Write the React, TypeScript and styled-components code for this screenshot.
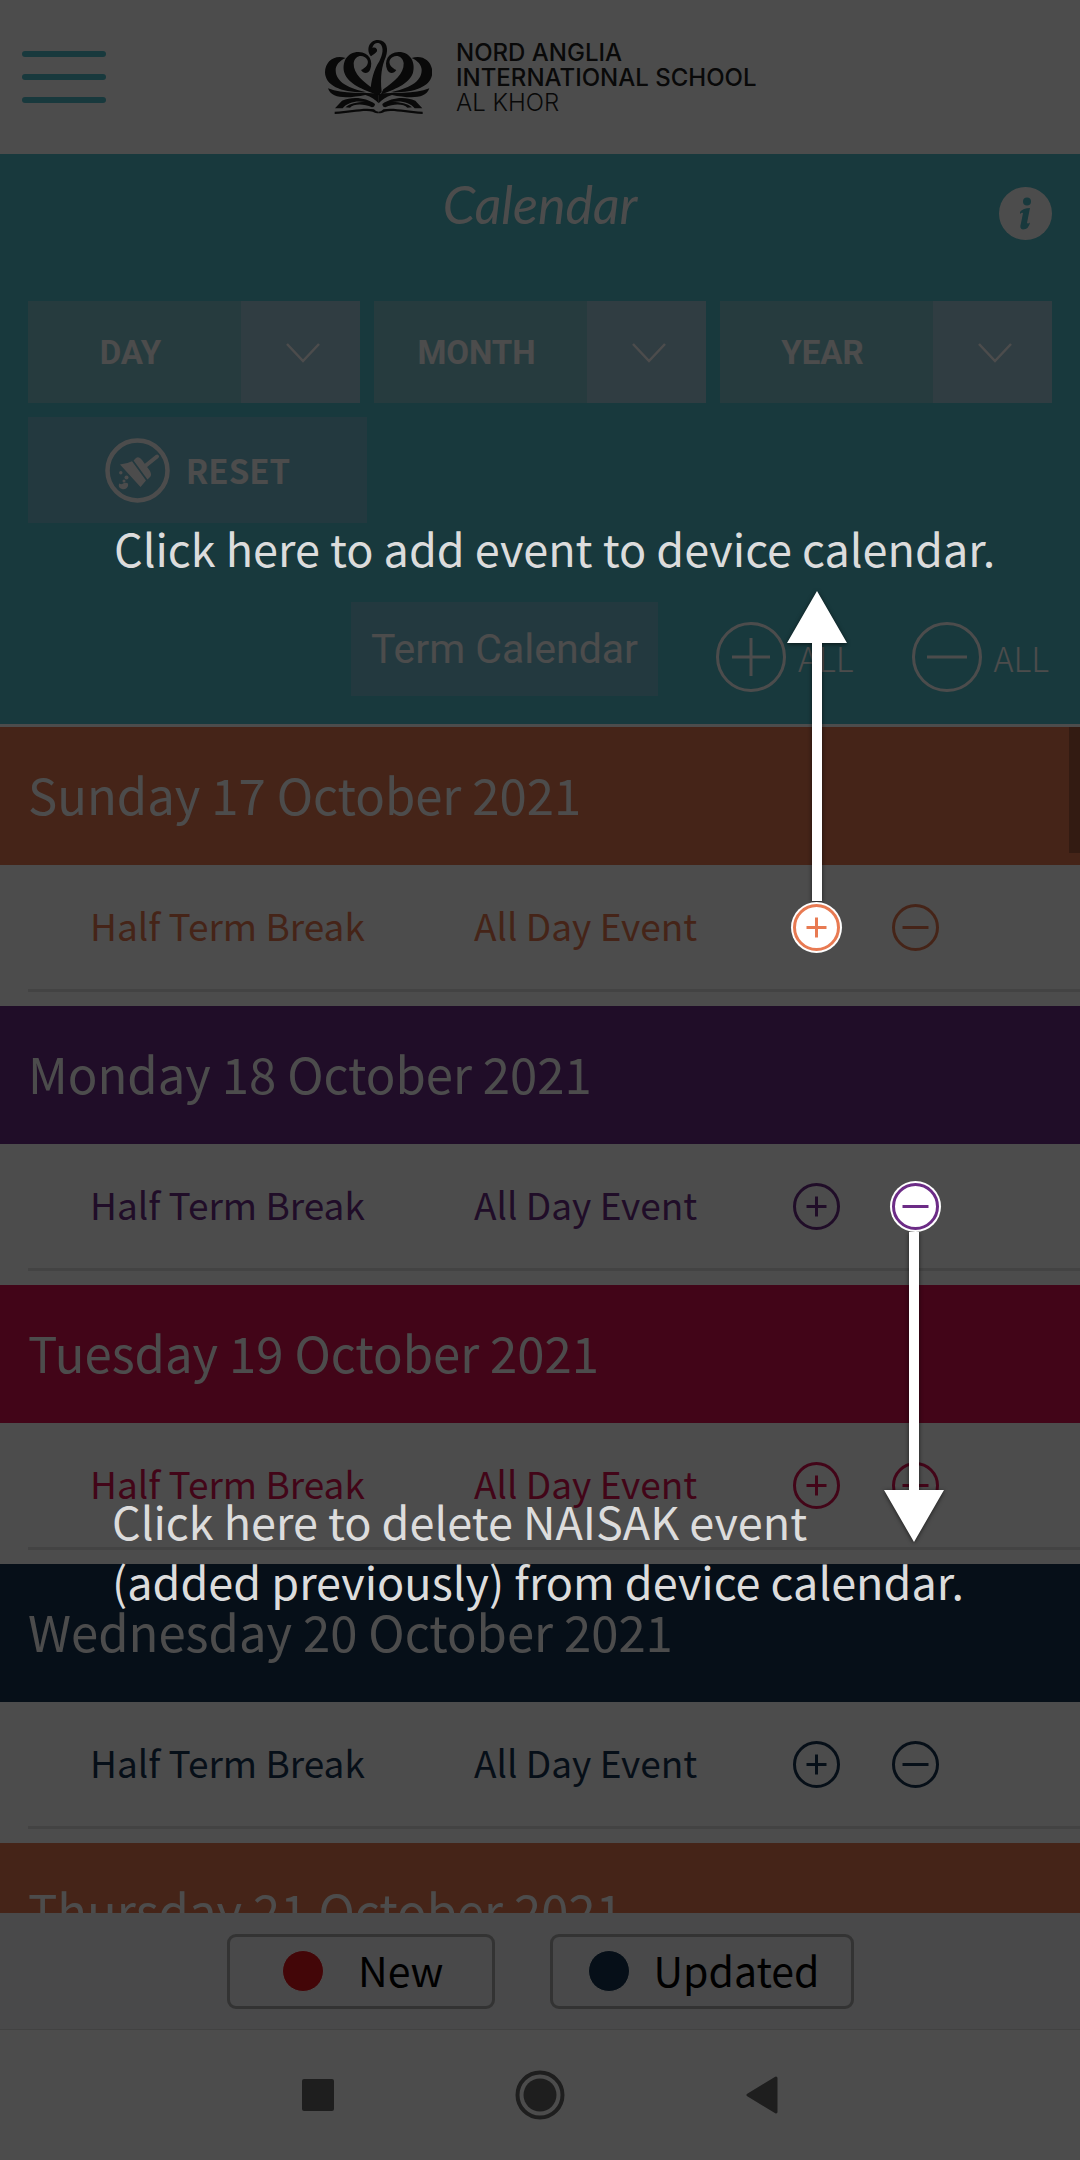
import React from "react";
import styled, { createGlobalStyle } from "styled-components";

const GlobalStyle = createGlobalStyle`
  *, *::before, *::after { box-sizing: border-box; }
  html, body, #root { height: 100%; }
  body { margin: 0; background: #ffffff; }
  button, select { font: inherit; color: inherit; border: 0; padding: 0; margin: 0; background: none; }
`;

const sans = `"Noto Sans CJK SC", "Noto Sans", sans-serif`;

const Screen = styled.div`
  position: relative;
  display: flex;
  flex-direction: column;
  height: 100vh;
  overflow: hidden;
  background: #ffffff;
  font-family: ${sans};
`;

const Header = styled.header`
  display: grid;
  grid-template-columns: 1fr auto 1fr;
  align-items: center;
  height: 154px;
  flex: none;
  padding: 0 22px;
`;

const MenuButton = styled.button`
  display: flex;
  flex-direction: column;
  gap: 17px;
  width: 84px;
`;

const MenuLine = styled.span`
  height: 6px;
  border-radius: 3px;
  background: #53becb;
`;

const Brand = styled.div`
  display: flex;
  align-items: center;
  gap: 24px;
`;

const BrandText = styled.div`
  display: flex;
  flex-direction: column;
  width: 299px;
  font-family: Inter, Lato, sans-serif;
  font-size: 24px;
  line-height: 25px;
  font-weight: 500;
  color: #1e1e1e;
  white-space: nowrap;
`;

const BrandPlace = styled.span`
  font-weight: 300;
`;

const Panel = styled.section`
  flex: none;
  padding: 0 28px 28px;
  background: #53becb;
  border-bottom: 3px solid #ffffff;
  color: #ffffff;
`;

const TitleRow = styled.div`
  display: grid;
  grid-template-columns: 1fr auto 1fr;
  align-items: start;
  height: 147px;
`;

const Title = styled.h1`
  grid-column: 2;
  margin: 18px 0 0;
  font-family: Lato, sans-serif;
  font-style: italic;
  font-weight: 400;
  font-size: 52px;
  line-height: 64px;
`;

const InfoButton = styled.button`
  justify-self: end;
  margin-top: 33px;
  width: 53px;
  height: 53px;
`;

const Filters = styled.div`
  display: grid;
  grid-template-columns: repeat(3, 1fr);
  gap: 14px;
`;

const SelectBox = styled.label`
  display: grid;
  grid-template-columns: 1fr 119px;
  height: 102px;
  background: #7fc5cf;
`;

const Select = styled.select`
  grid-area: 1 / 1 / 2 / 3;
  appearance: none;
  padding: 0 127px 0 0;
  font-family: Roboto, sans-serif;
  font-weight: 700;
  font-size: 33px;
  text-align: center;
  text-align-last: center;
  border-radius: 0;
`;

const SelectArrow = styled.span`
  grid-area: 1 / 2;
  display: flex;
  align-items: center;
  justify-content: center;
  padding: 2px 0 0 4px;
  background: #a0cbdc;
  pointer-events: none;
`;

const ResetButton = styled.button`
  display: flex;
  align-items: center;
  justify-content: center;
  gap: 16px;
  width: 339px;
  height: 106px;
  margin-top: 14px;
  background: #75bed2;
  font-weight: 700;
  font-size: 33px;
`;

const TermRow = styled.div`
  display: flex;
  justify-content: flex-end;
  align-items: flex-end;
  gap: 58px;
  margin-top: 79px;
  padding-right: 3px;
`;

const TermButton = styled.button`
  height: 94px;
  padding: 0 20px;
  background: #75bed2;
  font-family: Roboto, sans-serif;
  font-size: 41px;
  white-space: nowrap;
`;

const AllButton = styled.button`
  display: flex;
  align-items: center;
  gap: 12px;
  height: 78px;
  font-weight: 300;
  font-size: 34px;
`;

const ListFrame = styled.main`
  position: relative;
  flex: 1;
  min-height: 0;
  overflow: hidden;
`;

const ScrollThumb = styled.div`
  position: absolute;
  top: 0;
  right: 0;
  width: 11px;
  height: 126px;
  background: rgba(0, 0, 0, 0.26);
`;

const DayHeading = styled.h2<{ $color: string }>`
  margin: 0;
  padding: 0 28px 4px;
  background: ${(p) => p.$color};
  color: #ffffff;
  font-weight: 400;
  font-size: 49px;
  line-height: 134px;
  white-space: nowrap;
`;

const EventRow = styled.div<{ $color: string }>`
  display: grid;
  grid-template-columns: 384px 319px 99px 1fr;
  align-items: center;
  height: 124px;
  padding-left: 90px;
  color: ${(p) => p.$color};
  font-size: 37px;
  white-space: nowrap;
`;

const EventText = styled.span`
  padding-bottom: 4px;
`;

const Divider = styled.hr`
  height: 3px;
  margin: 0 0 14px 28px;
  border: 0;
  background: #e0e0e0;
`;

const RoundButton = styled.button<{ $lit?: boolean }>`
  display: block;
  width: 47px;
  height: 47px;
  border-radius: 50%;
  ${(p) =>
    p.$lit &&
    `
    position: relative;
    z-index: 3;
    background: #ffffff;
    box-shadow: 0 0 0 2px #ffffff;
  `}
`;

const Legend = styled.div`
  display: flex;
  flex: none;
  justify-content: center;
  align-items: center;
  gap: 55px;
  height: 117px;
  background: #f3f3f7;
  border-bottom: 1px solid #dddddd;
`;

const LegendButton = styled.button<{ $wide?: boolean }>`
  display: flex;
  align-items: center;
  justify-content: ${(p) => (p.$wide ? "center" : "space-between")};
  gap: 24px;
  width: ${(p) => (p.$wide ? 304 : 268)}px;
  height: 75px;
  padding: ${(p) => (p.$wide ? "0 0 0 4px" : "0 48px 0 52px")};
  border: 3px solid #aaaaaa;
  border-radius: 9px;
  font-size: 41px;
  line-height: 60px;
  color: #000000;
`;

const LegendText = styled.span`
  padding-bottom: 4px;
`;

const Dot = styled.span<{ $color: string }>`
  width: 42px;
  height: 42px;
  border-radius: 50%;
  border: 1px solid #ffffff;
  background: ${(p) => p.$color};
`;

const NavBar = styled.nav`
  display: grid;
  grid-template-columns: 222px 222px 222px;
  justify-content: center;
  align-items: center;
  flex: none;
  height: 130px;
`;

const NavButton = styled.button`
  display: flex;
  justify-content: center;
  align-items: center;
  height: 130px;
`;

const Shade = styled.div`
  position: absolute;
  inset: 0;
  z-index: 2;
  background: rgba(0, 0, 0, 0.7);
  pointer-events: none;
`;

const Hint = styled.p<{ $top: number; $left: number }>`
  position: absolute;
  top: ${(p) => p.$top}px;
  left: ${(p) => p.$left}px;
  margin: 0;
  color: #dcdcdc;
  font-size: 45px;
  line-height: 60px;
  white-space: nowrap;
`;

const Arrow = styled.svg<{ $top: number; $left: number }>`
  position: absolute;
  top: ${(p) => p.$top}px;
  left: ${(p) => p.$left}px;
  overflow: visible;
  filter: drop-shadow(0 1px 2px rgba(0, 0, 0, 0.6));
`;

const petals = (
  <>
    <path d="M137 114C104 102 75 124 75 157C76 198 125 219 200 217C150 206 107 188 107 150C107 135 119 122 137 114Z" />
    <path d="M183 150C190 162 204 162 210 150C221 124 208 97 176 96C140 96 125 128 133 158C146 194 190 208 230 224L222 208C190 186 160 162 161 130C163 106 190 100 202 119C208 132 197 143 183 150Z" />
    <path d="M84 205C94 240 150 234 196 225C214 230 226 240 236 250L236 222C190 216 130 224 84 205Z" />
    <path d="M105 265L126 242C160 228 200 234 225 252C225 258 221 262 216 262C190 250 160 252 150 263L136 262C150 250 170 246 196 246C170 241 142 246 128 265Z" />
    <path d="M104 275C150 274 190 262 222 268C228 274 232 275 236 275L236 280C230 280 224 279 218 275C190 269 150 281 104 282Z" />
  </>
);

const Crest = () => (
  <svg width="107" height="74" viewBox="75 60 321 222" fill="#1e1e1e" aria-hidden="true">
    {petals}
    <g transform="translate(472 0) scale(-1 1)">{petals}</g>
    <path d="M213 109C198 92 205 60 234 60C262 61 266 88 257 112C246 138 240 168 245 216L236 226L211 214C214 180 221 150 238 124C249 102 251 84 242 73C234 64 219 70 217 84C226 80 233 87 231 94C226 101 220 104 213 109Z" />
  </svg>
);

const Chevron = () => (
  <svg width="34" height="20" viewBox="0 0 34 20" fill="none" stroke="#ffffff" strokeWidth="2.5" aria-hidden="true">
    <path d="M1 1L17 18L33 1" />
  </svg>
);

const Brush = () => (
  <svg width="65" height="65" viewBox="0 0 65 65" fill="#ffffff" aria-hidden="true">
    <circle cx="32.5" cy="32.5" r="30" fill="none" stroke="#ffffff" strokeWidth="4.5" />
    <path d="M52 18.500L39 29" stroke="#ffffff" strokeWidth="4" strokeLinecap="round" />
    <path d="M28.600 22.500L31 20Q34 18 37 22L45 33Q47 37 45 39L42.500 41.500Z" />
    <path d="M15 26.500Q22 26 27 23.300L41 42.500L35.500 49Z" />
    <circle cx="15.800" cy="34.700" r="1.700" />
    <circle cx="21.500" cy="39.500" r="2" />
    <circle cx="19" cy="43" r="1.500" />
    <path d="M14 45.500Q17 47 19 45Q24 44 23 48Q21 52 17 51Q13 50 14 45.500Z" />
  </svg>
);

const SignIcon = ({ size, arm, sign, width }: { size: number; arm: number; sign: "plus" | "minus"; width: number }) => {
  const c = size / 2;
  return (
    <svg width={size} height={size} viewBox={`0 0 ${size} ${size}`} fill="none" stroke="currentColor" strokeWidth={width} aria-hidden="true">
      <circle cx={c} cy={c} r={c - width / 2} />
      <path d={`M${c - arm} ${c}H${c + arm}`} />
      {sign === "plus" && <path d={`M${c} ${c - arm}V${c + arm}`} />}
    </svg>
  );
};

const filters = ["DAY", "MONTH", "YEAR"];

type Day = { date: string; color: string; event?: string; time?: string; lit?: "plus" | "minus" };

const days: Day[] = [
  { date: "Sunday 17 October 2021", color: "#e87a52", event: "Half Term Break", time: "All Day Event", lit: "plus" },
  { date: "Monday 18 October 2021", color: "#6c2c86", event: "Half Term Break", time: "All Day Event", lit: "minus" },
  { date: "Tuesday 19 October 2021", color: "#dc1150", event: "Half Term Break", time: "All Day Event" },
  { date: "Wednesday 20 October 2021", color: "#173250", event: "Half Term Break", time: "All Day Event" },
  { date: "Thursday 21 October 2021", color: "#e87a52" },
];

export default function App() {
  return (
    <>
      <GlobalStyle />
      <Screen>
        <Header>
          <MenuButton aria-label="Menu">
            <MenuLine />
            <MenuLine />
            <MenuLine />
          </MenuButton>
          <Brand>
            <Crest />
            <BrandText>
              <span>NORD ANGLIA</span>
              <span>INTERNATIONAL SCHOOL</span>
              <BrandPlace>AL KHOR</BrandPlace>
            </BrandText>
          </Brand>
        </Header>

        <Panel>
          <TitleRow>
            <Title>Calendar</Title>
            <InfoButton aria-label="Information">
              <svg width="53" height="53" viewBox="0 0 53 53" aria-hidden="true">
                <circle cx="26.5" cy="26.5" r="26.5" fill="#ffffff" />
                <g fill="#53becb">
                  <circle cx="28" cy="14.500" r="4" />
                  <path d="M21 25Q24 21 31 21L28 36Q29 37 31 35.500Q30 42 24 42.500Q20 42 22 36L24 26Q23 25 21 27Z" />
                </g>
              </svg>
            </InfoButton>
          </TitleRow>
          <Filters>
            {filters.map((name) => (
              <SelectBox key={name}>
                <Select aria-label={name}>
                  <option>{name}</option>
                </Select>
                <SelectArrow>
                  <Chevron />
                </SelectArrow>
              </SelectBox>
            ))}
          </Filters>
          <ResetButton>
            <Brush />
            <span>RESET</span>
          </ResetButton>
          <TermRow>
            <TermButton>Term Calendar</TermButton>
            <AllButton>
              <SignIcon size={70} arm={19} sign="plus" width={3} />
              <span>ALL</span>
            </AllButton>
            <AllButton>
              <SignIcon size={70} arm={20} sign="minus" width={3} />
              <span>ALL</span>
            </AllButton>
          </TermRow>
        </Panel>

        <ListFrame>
          {days.map((day) => (
            <section key={day.date}>
              <DayHeading $color={day.color}>{day.date}</DayHeading>
              {day.event && (
                <>
                  <EventRow $color={day.color}>
                    <EventText>{day.event}</EventText>
                    <EventText>{day.time}</EventText>
                    <RoundButton $lit={day.lit === "plus"} aria-label="Add event">
                      <SignIcon size={47} arm={10} sign="plus" width={3} />
                    </RoundButton>
                    <RoundButton $lit={day.lit === "minus"} aria-label="Delete event">
                      <SignIcon size={47} arm={13} sign="minus" width={3} />
                    </RoundButton>
                  </EventRow>
                  <Divider />
                </>
              )}
            </section>
          ))}
          <ScrollThumb />
        </ListFrame>

        <Legend>
          <LegendButton>
            <Dot $color="#e0141c" />
            <LegendText>New</LegendText>
          </LegendButton>
          <LegendButton $wide>
            <Dot $color="#143250" />
            <LegendText>Updated</LegendText>
          </LegendButton>
        </Legend>

        <NavBar>
          <NavButton aria-label="Recent apps">
            <svg width="32" height="32" aria-hidden="true">
              <rect width="32" height="32" rx="2" fill="#666666" />
            </svg>
          </NavButton>
          <NavButton aria-label="Home">
            <svg width="50" height="50" viewBox="0 0 50 50" aria-hidden="true">
              <circle cx="25" cy="25" r="22.5" fill="none" stroke="#666666" strokeWidth="4" />
              <circle cx="25" cy="25" r="16.5" fill="#666666" />
            </svg>
          </NavButton>
          <NavButton aria-label="Back">
            <svg width="32" height="38" viewBox="0 0 32 38" aria-hidden="true">
              <path d="M30 2L2 19L30 36Z" fill="#666666" stroke="#666666" strokeWidth="3" strokeLinejoin="round" />
            </svg>
          </NavButton>
        </NavBar>

        <Shade>
          <Hint $top={518} $left={114}>
            Click here to add event to device calendar.
          </Hint>
          <Arrow $top={591} $left={787} width="60" height="310" fill="#ffffff">
            <path d="M30 0L60 52H35V310H25V52H0Z" />
          </Arrow>
          <Arrow $top={1232} $left={884} width="60" height="310" fill="#ffffff">
            <path d="M30 310L60 258H35V0H25V258H0Z" />
          </Arrow>
          <Hint $top={1491} $left={112}>
            Click here to delete NAISAK event
            <br />
            (added previously) from device calendar.
          </Hint>
        </Shade>
      </Screen>
    </>
  );
}
